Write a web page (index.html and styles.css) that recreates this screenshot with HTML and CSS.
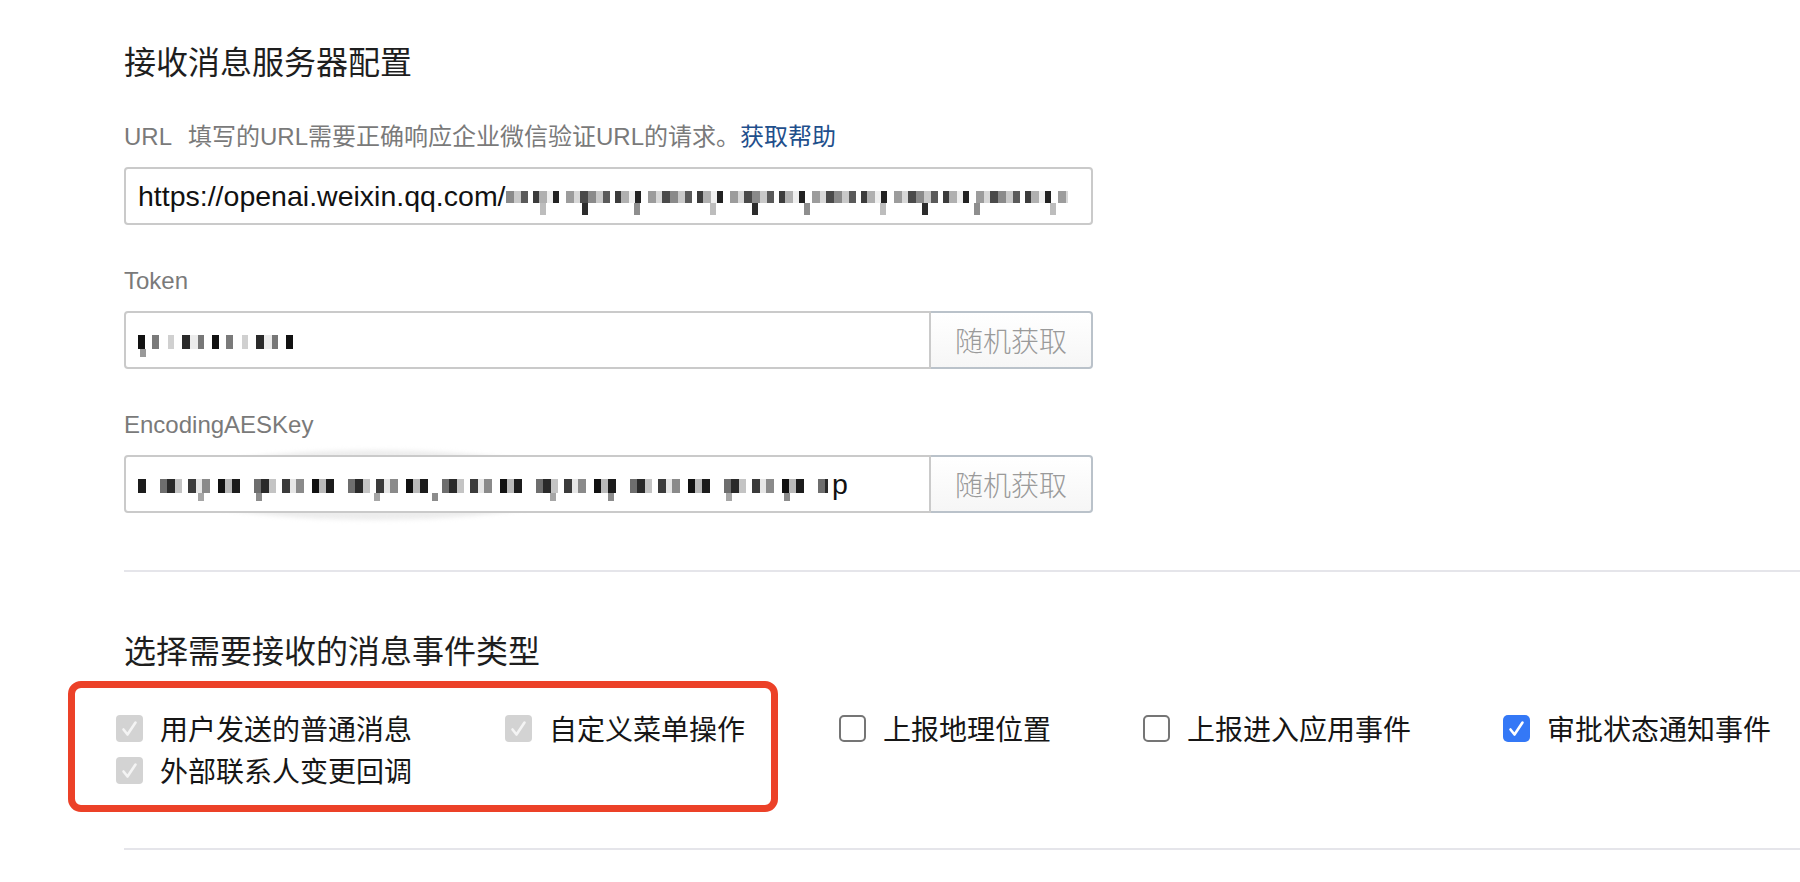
FILE: index.html
```html
<!DOCTYPE html>
<html lang="zh-CN">
<head>
    <meta charset="UTF-8">
    <meta name="viewport" content="width=device-width, initial-scale=1.0">
    <title>接收消息服务器配置</title>

    <link rel="stylesheet" href="styles.css">
</head>
<body>

    <div class="page">

        <!-- 服务器配置 -->
        <section class="config">
            <h2 class="section-title">接收消息服务器配置</h2>

            <div class="field field-first">
                <div class="field-label">URL<span class="field-tip">填写的URL需要正确响应企业微信验证URL的请求。<a class="help-link" href="#">获取帮助</a></span></div>
                <div class="input-group">
                    <div class="input-box input-full">https://openai.weixin.qq.com/<span class="mosaic mosaic-url"></span></div>
                </div>
            </div>

            <div class="field">
                <div class="field-label">Token</div>
                <div class="input-group">
                    <div class="input-box"><span class="mosaic mosaic-token"></span></div>
                    <button class="random-btn">随机获取</button>
                </div>
            </div>

            <div class="field">
                <div class="field-label">EncodingAESKey</div>
                <div class="input-group input-smudge">
                    <div class="input-box"><span class="mosaic mosaic-aes"></span><span class="aes-tail">p</span></div>
                    <button class="random-btn">随机获取</button>
                </div>
            </div>
        </section>

        <hr class="divider">

        <!-- 事件类型 -->
        <section class="events">
            <h2 class="section-title">选择需要接收的消息事件类型</h2>

            <div class="event-list">
                <div class="event-group">
                    <label class="event-item">
                        <span class="checkbox is-disabled"><svg viewBox="0 0 27 27"><path d="M7.5 14.5 L11.5 19.5 L19.5 7.5"/></svg></span>
                        <span class="event-name">用户发送的普通消息</span>
                    </label>
                    <label class="event-item">
                        <span class="checkbox is-disabled"><svg viewBox="0 0 27 27"><path d="M7.5 14.5 L11.5 19.5 L19.5 7.5"/></svg></span>
                        <span class="event-name">自定义菜单操作</span>
                    </label>
                    <label class="event-item">
                        <span class="checkbox is-disabled"><svg viewBox="0 0 27 27"><path d="M7.5 14.5 L11.5 19.5 L19.5 7.5"/></svg></span>
                        <span class="event-name">外部联系人变更回调</span>
                    </label>
                </div>

                <div class="event-rest">
                    <label class="event-item">
                        <span class="checkbox"></span>
                        <span class="event-name">上报地理位置</span>
                    </label>
                    <label class="event-item">
                        <span class="checkbox"></span>
                        <span class="event-name">上报进入应用事件</span>
                    </label>
                    <label class="event-item">
                        <span class="checkbox is-checked"><svg viewBox="0 0 27 27"><path d="M7.5 14.5 L11.5 19.5 L19.5 7.5"/></svg></span>
                        <span class="event-name">审批状态通知事件</span>
                    </label>
                </div>
            </div>
        </section>

        <hr class="divider divider-bottom">
    </div>

</body>
</html>
```

FILE: styles.css
```css
/* 기본 */
body {
    margin: 0;
    background: #fff;
    font-family: "Liberation Sans", "Noto Sans CJK SC", sans-serif;
}

.page {
    padding: 39px 0 0 124px;
    overflow: hidden;
}

.section-title {
    margin: 0;
    font-size: 32px;
    line-height: 48px;
    font-weight: normal;
    color: #1e1e1e;
}

/* 입력 필드 */
.field {
    margin-top: 38px;
}

.field-first {
    margin-top: 32px;
}

.field-label {
    font-size: 24px;
    line-height: 36px;
    color: #7a7a7a;
    margin-bottom: 12px;
}

.field-tip {
    margin-left: 16px;
}

.help-link {
    color: #1f4f8c;
    text-decoration: none;
}

.input-group {
    position: relative;
    display: flex;
    width: 969px;
    height: 58px;
}

.input-box {
    flex: 1;
    display: flex;
    align-items: center;
    box-sizing: border-box;
    height: 58px;
    padding: 0 12px;
    border: 2px solid #cacaca;
    border-radius: 4px 0 0 4px;
    font-size: 28.5px;
    color: #111;
    white-space: nowrap;
    overflow: hidden;
    background: #fff;
}

.input-full {
    border-radius: 4px;
}

.random-btn {
    width: 162px;
    height: 58px;
    box-sizing: border-box;
    border: 2px solid #bac2ca;
    border-left: none;
    border-radius: 0 4px 4px 0;
    background: linear-gradient(#ffffff, #f6f6f6);
    font-family: "Noto Sans CJK SC", sans-serif;
    font-size: 28px;
    font-weight: 300;
    color: #9a9a9a;
    padding: 0;
}

/* 모자이크 처리된 값 */
.mosaic {
    display: inline-block;
    flex-shrink: 0;
    background-repeat: no-repeat;
}

.mosaic-url {
    width: 562px;
    height: 24px;
    margin-top: 14px;
    background-image:
        repeating-linear-gradient(90deg, #8a8a8a 0 8px, #c9c9c9 8px 15px, #5a5a5a 15px 22px, #fff 22px 27px, #3c3c3c 27px 33px, #b0b0b0 33px 41px, #efefef 41px 47px, #222 47px 53px, #fff 53px 60px, #9c9c9c 60px 68px, #d8d8d8 68px 74px, #4a4a4a 74px 82px),
        repeating-linear-gradient(90deg, transparent 0 34px, #bdbdbd 34px 40px, transparent 40px 76px, #2c2c2c 76px 82px, transparent 82px 128px, #8e8e8e 128px 134px, transparent 134px 170px);
    background-size: 100% 12px, 100% 12px;
    background-position: 0 0, 0 12px;
}

.mosaic-token {
    width: 156px;
    height: 24px;
    margin-top: 10px;
    background-image:
        repeating-linear-gradient(90deg, #111 0 7px, #fff 7px 14px, #7a7a7a 14px 21px, #fff 21px 30px, #d0d0d0 30px 36px, #fff 36px 44px, #2a2a2a 44px 52px, #ececec 52px 60px, #777 60px 66px, #fff 66px 74px),
        repeating-linear-gradient(90deg, transparent 0 2px, #999 2px 8px, transparent 8px 156px);
    background-size: 100% 14px, 100% 10px;
    background-position: 0 2px, 0 14px;
}

.mosaic-aes {
    width: 690px;
    height: 22px;
    margin-top: 12px;
    background-image:
        repeating-linear-gradient(90deg, #1c1c1c 0 8px, #fff 8px 22px, #6e6e6e 22px 29px, #2a2a2a 29px 37px, #c4c4c4 37px 44px, #fff 44px 50px, #3b3b3b 50px 58px, #e6e6e6 58px 64px, #8a8a8a 64px 72px, #fff 72px 80px, #111 80px 87px, #b9b9b9 87px 94px),
        repeating-linear-gradient(90deg, transparent 0 60px, #a6a6a6 60px 66px, transparent 66px 118px, #8c8c8c 118px 124px, transparent 124px 176px);
    background-size: 100% 14px, 100% 8px;
    background-position: 0 0, 0 14px;
}

.aes-tail {
    margin-left: 4px;
}

/* 입력칸 뒤의 흐릿한 자국 */
.input-smudge::before {
    content: "";
    position: absolute;
    left: 40px;
    top: -5px;
    width: 420px;
    height: 70px;
    border-radius: 50%;
    background: #ededed;
    filter: blur(2px);
    z-index: -1;
}

/* 구분선 */
.divider {
    margin: 57px 0 0;
    border: none;
    height: 2px;
    background: #e5e5ea;
}

.divider-bottom {
    margin-top: 36px;
}

.events .section-title {
    margin-top: 56px;
}

/* 이벤트 목록 */
.event-list {
    display: flex;
    align-items: flex-start;
    margin-top: 5px;
}

.event-group {
    display: grid;
    grid-template-columns: auto auto;
    column-gap: 93px;
    margin-left: -56px;
    padding: 19px 26px 14px 41px;
    border: 7px solid #ec4128;
    border-radius: 13px;
}

.event-rest {
    display: flex;
    gap: 92px;
    margin: 26px 0 0 61px;
}

.event-item {
    display: flex;
    align-items: center;
    height: 42px;
    font-family: "Noto Sans CJK SC", sans-serif;
    font-size: 28px;
    color: #161616;
    white-space: nowrap;
}

.checkbox {
    display: flex;
    align-items: center;
    justify-content: center;
    box-sizing: border-box;
    width: 27px;
    height: 27px;
    margin-right: 17px;
    border: 2px solid #757575;
    border-radius: 5px;
    background: #fff;
}

.checkbox svg {
    width: 27px;
    height: 27px;
    flex-shrink: 0;
}

.checkbox path {
    fill: none;
    stroke: #fff;
    stroke-width: 2.6;
    stroke-linecap: round;
    stroke-linejoin: round;
}

.checkbox.is-disabled {
    border: none;
    border-radius: 4px;
    background: #d3d3d3;
}

.checkbox.is-disabled path {
    stroke: #f4f4f4;
}

.checkbox.is-checked {
    border: none;
    background: #3478f6;
}
```
